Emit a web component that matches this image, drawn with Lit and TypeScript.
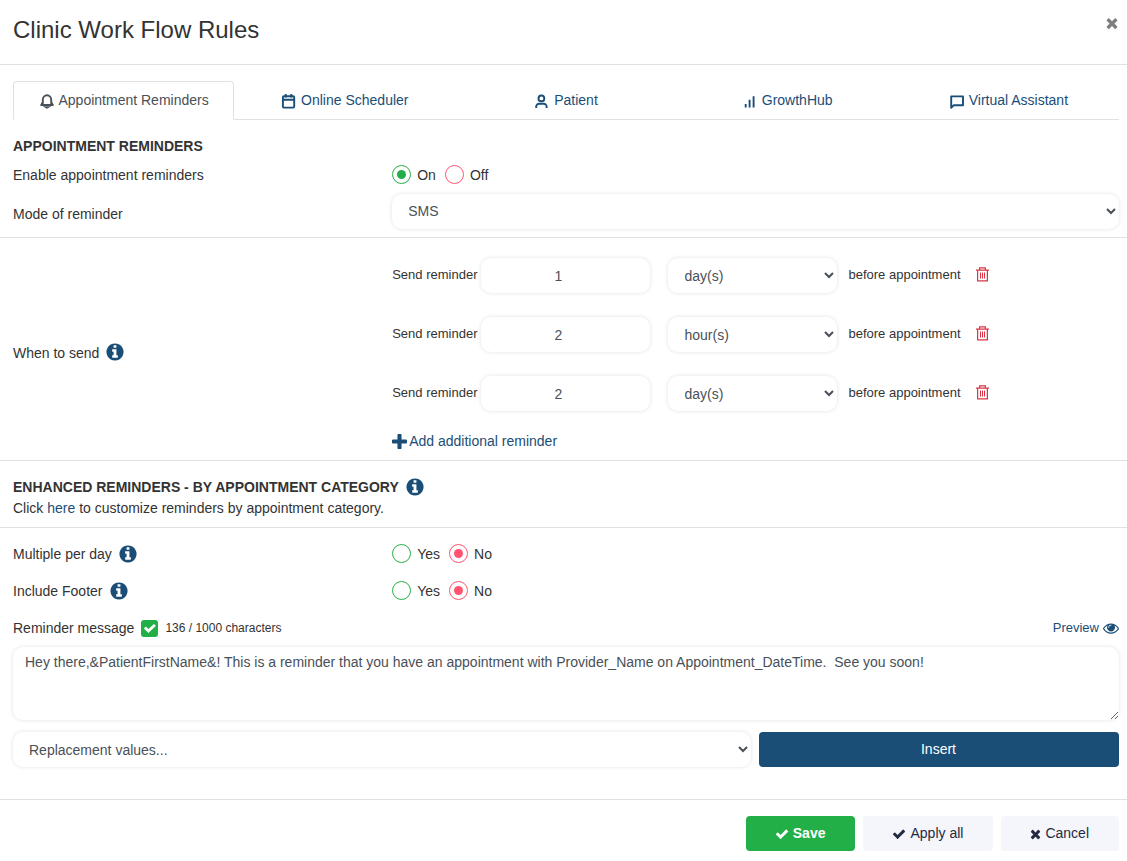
import { LitElement, html, svg, css } from "lit";
import { customElement, state } from "lit/decorators.js";
import { classMap } from "lit/directives/class-map.js";

const CHECK = "M1671 566q0 40-28 68l-724 724-136 136q-28 28-68 28t-68-28l-136-136-362-362q-28-28-28-68t28-68l136-136q28-28 68-28t68 28l294 295 656-657q28-28 68-28t68 28l136 136q28 28 28 68z";
const TIMES = "M1490 1322q0 40-28 68l-136 136q-28 28-68 28t-68-28l-294-294-294 294q-28 28-68 28t-68-28l-136-136q-28-28-28-68t28-68l294-294-294-294q-28-28-28-68t28-68l136-136q28-28 68-28t68 28l294 294 294-294q28-28 68-28t68 28l136 136q28 28 28 68t-28 68l-294 294 294 294q28 28 28 68z";
const PLUS = "M1600 736v192q0 40-28 68t-68 28h-416v416q0 40-28 68t-68 28h-192q-40 0-68-28t-28-68v-416h-416q-40 0-68-28t-28-68v-192q0-40 28-68t68-28h416v-416q0-40 28-68t68-28h192q40 0 68 28t28 68v416h416q40 0 68 28t28 68z";
const INFO = "M1152 1376v-160q0-14-9-23t-23-9h-96v-512q0-14-9-23t-23-9h-320q-14 0-23 9t-9 23v160q0 14 9 23t23 9h96v320h-96q-14 0-23 9t-9 23v160q0 14 9 23t23 9h448q14 0 23-9t9-23zm-128-896v-160q0-14-9-23t-23-9h-192q-14 0-23 9t-9 23v160q0 14 9 23t23 9h192q14 0 23-9t9-23zm640 416q0 209-103 385.5t-279.5 279.5-385.5 103-385.5-103-279.5-279.5-103-385.5 103-385.5 279.5-279.5 385.5-103 385.5 103 279.5 279.5 103 385.5z";
const EYE = "M1664 960q-152-236-381-353 61 104 61 225 0 185-131.5 316.5t-316.5 131.5-316.5-131.5-131.5-316.5q0-121 61-225-229 117-381 353 133 205 333.5 326.5t434.5 121.5 434.5-121.5 333.5-326.5zm-720-384q0-20-14-34t-34-14q-125 0-214.5 89.5t-89.5 214.5q0 20 14 34t34 14 34-14 14-34q0-86 61-147t147-61q20 0 34-14t14-34zm848 384q0 34-20 69-140 230-376.5 368.5t-499.5 138.5-499.5-139-376.5-368q-20-35-20-69t20-69q140-229 376.5-368t499.5-139 499.5 139 376.5 368q20 35 20 69z";

const solid = (path: string, size: string, box = "0 0 1792 1792") =>
  html`<svg class="icon ${size}" viewBox=${box} fill="currentColor" aria-hidden="true"><path d=${path}></path></svg>`;

const line = (shape: unknown) =>
  html`<svg class="icon s16" viewBox="0 0 16 16" fill="none" stroke="currentColor" stroke-width="1.9" aria-hidden="true">${shape}</svg>`;

const tabs = [
  { id: "reminders", label: "Appointment Reminders", icon: svg`<path d="M3.8 11.6V6.8a4.2 4.6 0 0 1 8.4 0v4.8M1.4 12h13.2M3.4 9.6 2.4 11.8M12.6 9.6l1 2.2"/><path d="M6.2 14h3.6L8 15z" stroke-width="1.4"/>` },
  { id: "scheduler", label: "Online Scheduler", icon: svg`<rect x="1.9" y="3.2" width="11.3" height="11.4" rx="1"/><path d="M1.9 6.8h11.3M4.7 1v3.6M10.3 1v3.6"/>` },
  { id: "patient", label: "Patient", icon: svg`<circle cx="7.4" cy="5.4" r="2.9"/><path d="M2.2 15v-1.4a2.8 2.8 0 0 1 2.8-2.8h4.8a2.8 2.8 0 0 1 2.8 2.8V15"/>` },
  { id: "growth", label: "GrowthHub", icon: svg`<path d="M3.7 11v3.6M7.6 6.8v7.8M11.6 3.2v11.4"/>` },
  { id: "assistant", label: "Virtual Assistant", icon: svg`<path d="M2.2 14.8V3.4h11.8v8.8H4.8z" stroke-linejoin="round"/>` },
];

@customElement("app-root")
export class AppRoot extends LitElement {
  @state() private tab = "reminders";
  @state() private reminders = [
    { count: 1, unit: "day(s)" },
    { count: 2, unit: "hour(s)" },
    { count: 2, unit: "day(s)" },
  ];

  static styles = css`
    :host { display: block; font: 14px/21px "Liberation Sans", Arial, sans-serif; color: #333; background: #fff; --brand: #1a4e77; --rule: #dee2e6; --green: #23af47; --red: #ff5370; }
    * { box-sizing: border-box; }
    button, input, select, textarea { font: inherit; color: inherit; margin: 0; }
    button { border: 0; background: none; padding: 0; cursor: pointer; }
    a { color: var(--brand); text-decoration: none; }
    h1, h2, p { margin: 0; }
    .icon { display: block; flex: none; }
    .s11 { width: 11px; height: 14px; }
    .s14 { width: 14px; height: 14px; }
    .s15 { width: 15px; height: 15px; }
    .s16 { width: 16px; height: 16px; }
    .s20 { width: 20px; height: 20px; }
    header { display: flex; justify-content: space-between; align-items: flex-start; padding: 14px 7px 14px 13px; border-bottom: 1px solid var(--rule); }
    h1 { font-size: 24px; line-height: 32px; font-weight: 400; padding-bottom: 4px; }
    .close { color: #7f7f7f; padding: 1px 0; }
    .tabs { display: grid; grid-template-columns: repeat(5, 1fr); margin: 16px 8px 0 13px; border-bottom: 1px solid var(--rule); }
    .tab { display: flex; align-items: center; justify-content: center; gap: 4px; height: 39px; margin-bottom: -1px; border: 1px solid transparent; border-radius: 4px 4px 0 0; color: var(--brand); }
    .tab.active { color: #495057; background: #fff; border-color: var(--rule) var(--rule) #fff; }
    section { padding: 0 8px 0 13px; border-bottom: 1px solid var(--rule); }
    section:last-of-type { border-bottom: 0; }
    .general { padding-top: 16px; padding-bottom: 8px; }
    .general .row { min-height: 36px; }
    .general .row > label { padding-top: 6px; }
    .when { padding-top: 20px; padding-bottom: 8px; }
    .when .name { padding-bottom: 4px; }
    .enhanced { padding-top: 16px; padding-bottom: 8px; }
    .message { padding-top: 8px; padding-bottom: 32px; }
    h2 { display: flex; align-items: center; gap: 6px; font-size: 14px; line-height: 21px; height: 21px; font-weight: 700; }
    .row { display: grid; grid-template-columns: 12fr 23fr; align-items: center; min-height: 37px; }
    .name { display: flex; align-items: center; gap: 6px; }
    .info { color: var(--brand); padding-bottom: 2px; }
    .choices { display: flex; gap: 9px; }
    .choice { display: flex; align-items: center; gap: 6px; --tone: var(--green); }
    .choice.no { --tone: var(--red); }
    .choice input { appearance: none; width: 19px; height: 19px; margin-bottom: 2px; border: 1px solid var(--tone); border-radius: 50%; display: grid; place-items: center; }
    .choice input:checked::before { content: ""; width: 9px; height: 9px; border-radius: 50%; background: var(--tone); }
    .field { display: block; width: 100%; min-width: 0; height: 35px; padding: 0 12px; border: 0; border-radius: 10px; background: #fff; box-shadow: 0 0 4px rgba(0, 0, 0, 0.12); color: #495057; }
    .reminders { display: grid; gap: 24px; }
    .reminder { display: flex; align-items: center; font-size: 13px; line-height: 20px; }
    .reminder .field { width: 169px; font-size: 14px; }
    .reminder input { text-align: center; margin: 0 18px 0 4px; }
    .reminder select { margin-right: 11px; }
    .reminder label, .reminder .after { padding-bottom: 2px; }
    .trash { color: #dc3545; margin: 0 0 2px 14px; }
    .add { display: flex; align-items: center; gap: 2px; color: var(--brand); margin-top: 20px; }
    .stamp { display: flex; align-items: center; justify-content: space-between; height: 37px; }
    .stamp .name { gap: 7px; }
    .tick { appearance: none; width: 17px; height: 17px; border-radius: 3px; background: var(--green); display: grid; place-items: center; }
    .tick:checked::before { content: ""; width: 12px; height: 9px; background: #fff; clip-path: polygon(0 50%, 16% 29%, 38% 55%, 84% 0, 100% 20%, 38% 100%); }
    .count { font-size: 12px; }
    .preview { display: flex; align-items: center; gap: 4px; font-size: 13px; padding-bottom: 2px; }
    textarea.field { height: 73px; padding: 5px 12px; line-height: 20px; resize: vertical; }
    .insert-row { display: grid; grid-template-columns: 41fr 20fr; gap: 8px; margin-top: 12px; }
    .btn { display: flex; align-items: center; justify-content: center; gap: 4px; height: 35px; padding: 0 30px 0 29px; border-radius: 4px; background: #f5f6fb; color: #242a42; }
    .btn.primary { background: var(--brand); color: #fff; }
    .btn.save { background: var(--green); color: #fff; font-weight: 700; }
    footer { display: flex; justify-content: flex-end; gap: 8px; padding: 16px 8px 10px; border-top: 1px solid var(--rule); }
  `;

  private info(label: string) {
    return html`<button class="info" type="button" aria-label=${"About " + label}>${solid(INFO, "s20")}</button>`;
  }

  private choice(name: string, yes: string, no: string, value: boolean) {
    return html`<div class="choices" role="radiogroup" aria-label=${name}>
      <label class="choice"><input type="radio" name=${name} .checked=${value} />${yes}</label>
      <label class="choice no"><input type="radio" name=${name} .checked=${!value} />${no}</label>
    </div>`;
  }

  private remove(index: number) {
    this.reminders = this.reminders.filter((_, i) => i !== index);
  }

  render() {
    return html`
      <header>
        <h1>Clinic Work Flow Rules</h1>
        <button class="close" type="button" aria-label="Close">${solid(TIMES, "s16")}</button>
      </header>
      <div class="tabs" role="tablist">
        ${tabs.map((t) => html`<button type="button" role="tab" aria-selected=${this.tab === t.id}
          class=${classMap({ tab: true, active: this.tab === t.id })} @click=${() => (this.tab = t.id)}>${line(t.icon)}<span>${t.label}</span></button>`)}
      </div>

      <section class="general">
        <h2>APPOINTMENT REMINDERS</h2>
        <div class="row">
          <span>Enable appointment reminders</span>
          ${this.choice("Enable appointment reminders", "On", "Off", true)}
        </div>
        <div class="row">
          <label for="mode">Mode of reminder</label>
          <select class="field" id="mode"><option>SMS</option><option>Email</option></select>
        </div>
      </section>

      <section class="when">
        <div class="row">
          <div class="name">When to send ${this.info("when to send")}</div>
          <div>
            <div class="reminders">
              ${this.reminders.map((r, i) => html`<div class="reminder">
                <label for=${"count" + i}>Send reminder</label>
                <input class="field" type="number" id=${"count" + i} .value=${String(r.count)} />
                <select class="field" aria-label="Unit">
                  ${["day(s)", "hour(s)"].map((u) => html`<option ?selected=${u === r.unit}>${u}</option>`)}
                </select>
                <span class="after">before appointment</span>
                <button class="trash" type="button" aria-label="Delete reminder" @click=${() => this.remove(i)}>
                  <svg class="icon s15" viewBox="0 0 15 15" fill="none" stroke="currentColor" stroke-width="1.2" aria-hidden="true">
                    <path d="M1 3.1h13M4.6 3V.9h5.8V3M2.6 3.1v10.8h9.8V3.1" />
                    <path d="M5.5 5.5v6M7.5 5.5v6M9.5 5.5v6" stroke-width="1" />
                  </svg>
                </button>
              </div>`)}
            </div>
            <button class="add" type="button" @click=${() => (this.reminders = [...this.reminders, { count: 1, unit: "day(s)" }])}>
              ${solid(PLUS, "s15", "192 128 1408 1408")}<span>Add additional reminder</span>
            </button>
          </div>
        </div>
      </section>

      <section class="enhanced">
        <h2>ENHANCED REMINDERS - BY APPOINTMENT CATEGORY ${this.info("enhanced reminders")}</h2>
        <p>Click <a href="#categories">here</a> to customize reminders by appointment category.</p>
      </section>

      <section class="message">
        <div class="row">
          <div class="name">Multiple per day ${this.info("multiple per day")}</div>
          ${this.choice("Multiple per day", "Yes", "No", false)}
        </div>
        <div class="row">
          <div class="name">Include Footer ${this.info("footer")}</div>
          ${this.choice("Include Footer", "Yes", "No", false)}
        </div>
        <div class="stamp">
          <div class="name">
            <label for="message">Reminder message</label>
            <input class="tick" type="checkbox" checked aria-label="Reminder message enabled" />
            <span class="count">136 / 1000 characters</span>
          </div>
          <a class="preview" href="#preview">Preview ${solid(EYE, "s16")}</a>
        </div>
        <textarea class="field" id="message" .value=${"Hey there,&PatientFirstName&! This is a reminder that you have an appointment with Provider_Name on Appointment_DateTime.  See you soon!"}></textarea>
        <div class="insert-row">
          <select class="field" aria-label="Replacement values"><option>Replacement values...</option></select>
          <button class="btn primary" type="button">Insert</button>
        </div>
      </section>

      <footer>
        <button class="btn save" type="button">${solid(CHECK, "s14")}Save</button>
        <button class="btn" type="button">${solid(CHECK, "s14")}Apply all</button>
        <button class="btn" type="button">${solid(TIMES, "s11", "192 0 1408 1792")}Cancel</button>
      </footer>
    `;
  }
}
